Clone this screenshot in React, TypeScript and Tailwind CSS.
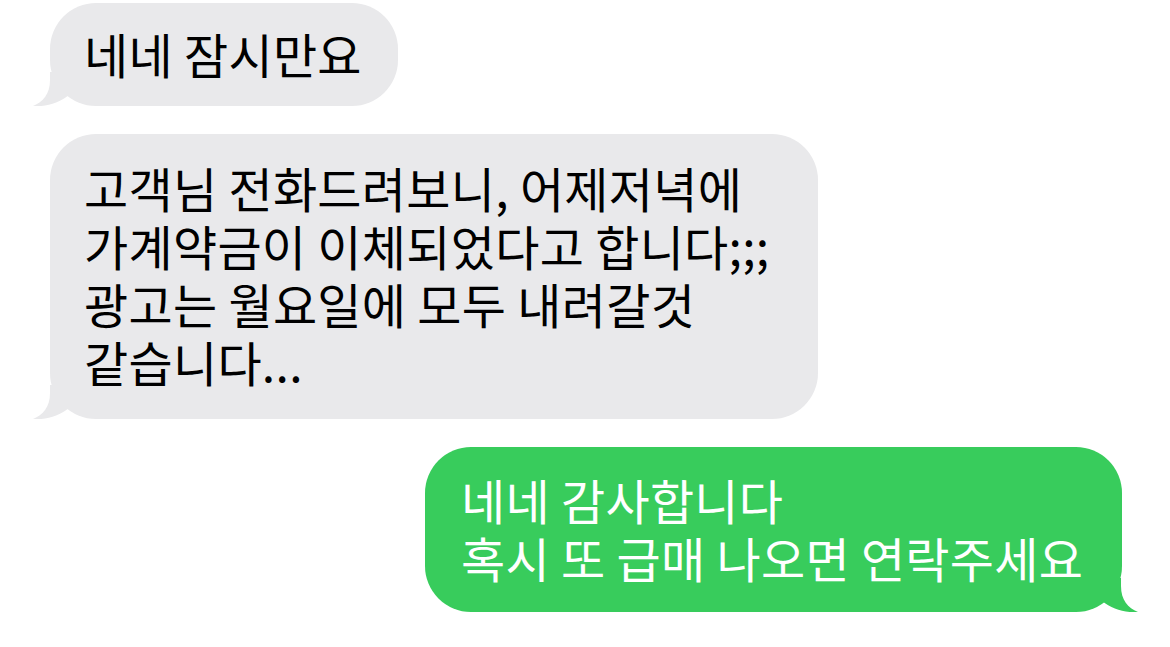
import type { ReactNode } from "react";

type Msg = {
  id: number;
  fromMe: boolean;
  text: string;
  box: string; // width + padding, tuned per bubble
};

const messages: Msg[] = [
  { id: 1, fromMe: false, text: "네네 잠시만요", box: "w-[348px] pt-[21px] pb-[24px]" },
  {
    id: 2,
    fromMe: false,
    text: "고객님 전화드려보니, 어제저녁에\n가계약금이 이체되었다고 합니다;;;\n광고는 월요일에 모두 내려갈것\n같습니다...",
    box: "w-[768px] pt-[24px] pb-[29px]",
  },
  {
    id: 3,
    fromMe: true,
    text: "네네 감사합니다\n혹시 또 급매 나오면 연락주세요",
    box: "w-[697px] pt-[23px] pb-[26px]",
  },
];

// 말풍선 꼬리 (왼쪽 기준, 오른쪽은 뒤집어서 사용)
function Tail({ color, mine }: { color: string; mine: boolean }) {
  return (
    <svg
      width="40"
      height="34"
      viewBox="0 0 40 34"
      className={mine ? "absolute bottom-0 right-[-16px] -scale-x-100" : "absolute bottom-0 left-[-17px]"}
    >
      <path d="M17 0 L17 8 C17 22 10 30 0 34 C14 35 26 31 36 23 L36 0 Z" fill={color} />
    </svg>
  );
}

function Bubble({ msg }: { msg: Msg }) {
  const color = msg.fromMe ? "#38cc5c" : "#e9e9eb";
  return (
    <div className={`relative ${msg.box} rounded-[46px] ${msg.fromMe ? "bg-[#38cc5c] text-white pl-[36px]" : "bg-[#e9e9eb] text-black pl-[34px]"}`}>
      <Tail color={color} mine={msg.fromMe} />
      <p className="relative text-[48px] leading-[58px] tracking-[0.3px] whitespace-pre">{msg.text}</p>
    </div>
  );
}

function Row({ mine, children }: { mine: boolean; children: ReactNode }) {
  return <div className={`flex ${mine ? "justify-end pr-[48px]" : "justify-start pl-[50px]"}`}>{children}</div>;
}

export default function App() {
  return (
    <div
      className="w-[1170px] h-[647px] bg-white overflow-hidden pt-[3px] flex flex-col gap-[28px]"
      style={{ fontFamily: '"Noto Sans CJK KR", "Noto Sans", sans-serif' }}
    >
      {messages.map((m) => (
        <Row key={m.id} mine={m.fromMe}>
          <Bubble msg={m} />
        </Row>
      ))}
    </div>
  );
}
